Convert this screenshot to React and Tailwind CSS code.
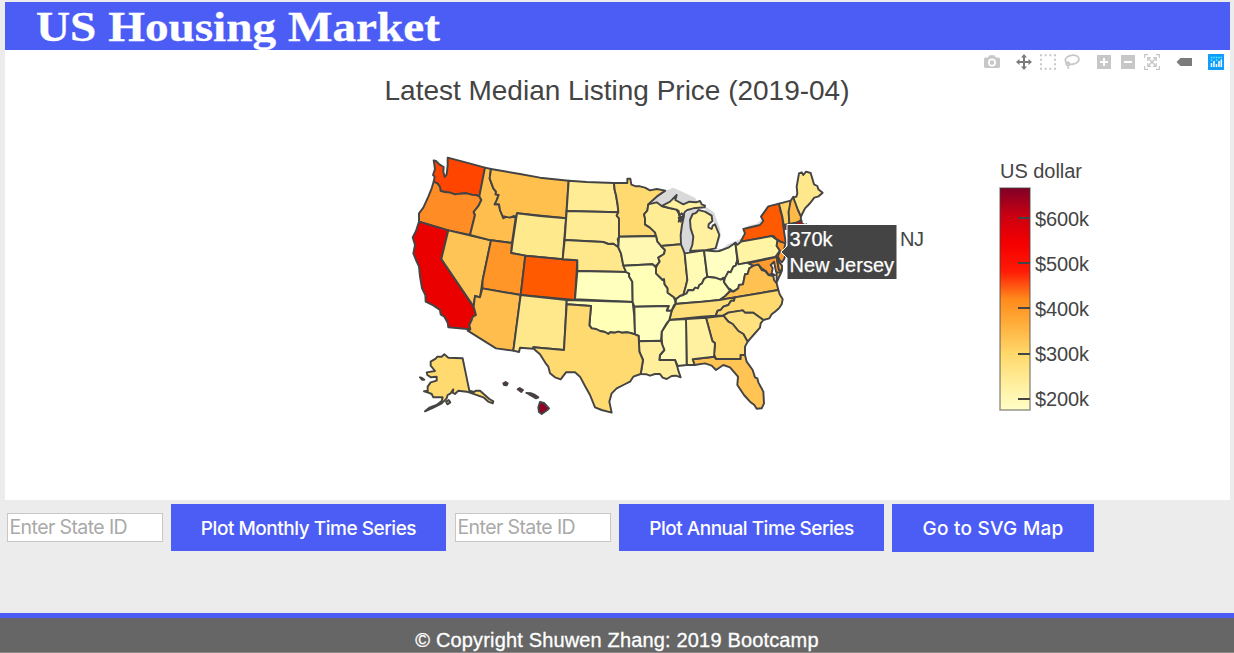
import React from "react";

// State outlines in a 3x coordinate space whose origin is (400, 145) on the page.
const STATES = [
  ["WA", "#ff4500", "101,46 108,48 118,58 131,66 130,80 134,96 140,88 143,60 143,38 200,53 255,68 247,110 238,154 228,150 215,149 200,145 180,146 165,148 150,143 135,141 122,138 120,126 112,115 101,110 104,95 99,90 105,72"],
  ["OR", "#ff8c25", "101,110 112,115 120,126 122,138 135,141 150,143 165,148 180,146 200,145 215,149 228,150 238,154 244,165 236,182 221,201 225,210 210,270 145,256 57,230 57,205 70,188 85,155 95,130"],
  ["CA", "#eb0000", "57,230 145,256 124,342 221,485 228,510 218,516 215,525 208,540 211,553 145,547 143,533 133,515 122,508 120,495 100,481 77,470 76,450 66,430 60,395 57,365 48,345 40,325 45,300 38,277 48,258"],
  ["NV", "#ffc456", "145,256 273,286 248,405 240,457 225,453 221,485 124,342"],
  ["ID", "#ffbe4e", "255,68 273,72 269,100 280,130 288,140 287,148 296,150 290,166 284,178 297,178 300,195 305,205 312,218 330,214 347,218 336,294 273,286 210,270 225,210 221,201 236,182 244,165 238,154"],
  ["MT", "#ffc04e", "273,72 360,87 420,98 506,107 498,220 351,205 347,218 342,213 330,218 312,214 310,220 304,205 300,195 297,178 284,178 290,166 296,150 287,148 288,140 280,130 269,100"],
  ["WY", "#ffe98d", "351,205 420,213 498,220 488,343 376,332 333,324"],
  ["UT", "#ff9627", "273,286 336,294 333,324 376,332 362,450 247,430 248,405"],
  ["CO", "#ff5a00", "376,332 488,343 532,346 525,465 362,450"],
  ["AZ", "#ffbd4d", "247,430 362,450 340,617 288,610 203,557 211,553 208,540 215,525 218,516 228,510 221,485 225,453 240,457"],
  ["NM", "#ffe88c", "362,450 500,465 492,615 400,607 400,611 360,608 357,621 340,617"],
  ["ND", "#ffec94", "506,107 560,111 642,114 644,135 648,150 653,180 655,202 500,198"],
  ["SD", "#ffec94", "500,198 655,202 650,212 657,220 657,275 653,283 655,292 655,307 640,296 625,297 610,291 494,285"],
  ["NE", "#ffe88c", "494,285 610,291 625,297 640,296 655,307 663,325 668,352 678,381 532,378 532,346 488,343"],
  ["KS", "#ffffbe", "532,378 678,381 688,386 687,394 697,410 698,471 525,463"],
  ["OK", "#ffffb8", "500,465 698,471 703,515 705,568 692,564 682,562 665,563 655,560 645,563 630,562 625,567 615,561 600,558 588,552 575,550 568,541 573,483 500,478"],
  ["MN", "#ffda70", "642,114 682,114 682,101 691,101 694,119 708,124 720,124 735,128 750,136 770,132 796,137 770,155 745,178 742,197 732,208 735,220 735,238 750,248 765,262 768,273 657,275 657,220 650,212 655,202 653,180 648,150 644,135"],
  ["WI", "#ffed95", "745,178 770,172 785,183 808,189 830,194 836,205 840,215 836,230 852,212 846,240 842,270 843,298 783,303 772,290 768,273 765,262 750,248 735,238 735,220 732,208 742,197"],
  ["IA", "#fff8b2", "657,275 768,273 772,290 783,303 795,315 792,327 775,338 779,350 773,358 765,364 758,358 670,362 663,325 655,307"],
  ["MO", "#ffffb8", "670,362 758,358 768,368 768,385 788,405 792,402 794,418 803,430 803,443 820,455 825,465 827,477 822,480 815,497 800,497 806,483 703,485 698,471 697,410 687,394 688,386 678,381"],
  ["IL", "#ffe98c", "783,303 843,298 848,310 854,325 862,405 857,425 850,450 840,453 828,463 820,455 803,443 803,430 794,418 792,402 788,405 768,385 768,368 773,358 779,350 775,338 792,327 795,315"],
  ["IN", "#fffab4", "854,325 912,316 922,398 912,402 906,415 898,420 894,430 885,428 880,436 865,435 860,445 850,450 857,425 862,405"],
  ["OH", "#ffffc4", "912,316 945,319 958,318 985,308 1006,293 1012,345 1007,362 1000,365 992,382 985,380 978,400 970,398 962,404 945,398 922,395"],
  ["MI-L", "#fff1a0", "870,318 912,316 947,310 958,270 945,238 938,242 935,252 925,247 926,238 937,228 935,212 915,200 895,195 890,202 885,205 878,207 870,225 872,250 880,275 877,300"],
  ["MI-U", "#fff1a0", "785,183 810,170 830,150 826,165 850,178 868,170 888,172 900,168 905,178 915,182 914,187 880,190 862,195 855,200 850,212 845,205 838,212 836,198 830,194 808,189"],
  ["NY", "#ff5a00", "1023,288 1035,265 1030,252 1080,240 1090,228 1083,215 1105,184 1137,176 1142,200 1147,215 1150,245 1157,292 1153,296 1130,283 1120,273 1023,290"],
  ["PA", "#fff3a4", "1006,293 1012,299 1023,290 1115,273 1125,280 1135,287 1130,302 1140,317 1130,330 1125,336 1015,358"],
  ["NJ", "#ff9c2d", "1132,287 1156,295 1153,310 1160,320 1152,343 1146,352 1132,338 1140,317 1130,302"],
  ["MA", "#e30000", "1153,243 1170,240 1190,234 1204,225 1206,236 1212,238 1213,246 1195,252 1155,252"],
  ["VT", "#ffd164", "1137,176 1172,167 1172,185 1166,200 1168,237 1151,240 1147,215"],
  ["NH", "#ffb946", "1172,167 1180,155 1190,175 1194,195 1203,213 1202,227 1190,232 1168,237 1166,200"],
  ["ME", "#ffe88c", "1180,158 1189,155 1192,145 1190,125 1197,85 1205,82 1210,90 1218,80 1232,84 1242,118 1252,123 1255,133 1268,143 1256,154 1243,158 1232,172 1225,180 1215,190 1208,204 1203,215 1192,190"],
  ["WV", "#ffffc8", "1012,345 1015,358 1045,353 1060,362 1055,372 1048,370 1043,387 1035,388 1029,418 1017,420 1015,430 1000,440 990,432 985,430 972,412 975,398 985,380 992,382 1000,365 1007,362"],
  ["VA", "#ffc252", "958,465 975,453 990,438 1000,440 1015,430 1017,420 1029,418 1035,388 1043,387 1048,370 1060,362 1075,358 1085,375 1095,378 1105,390 1120,393 1122,405 1130,415 1135,435"],
  ["MD", "#ff9c2d", "1045,355 1130,336 1137,375 1145,378 1140,390 1128,380 1122,350 1112,360 1118,370 1115,385 1125,390 1105,388 1098,378 1085,370 1075,358 1060,362"],
  ["DE", "#ffb442", "1130,336 1136,338 1138,352 1146,362 1146,376 1137,376"],
  ["VA-E", "#ffc252", "1130,384 1144,380 1138,394 1130,412"],
  ["KY", "#ffffba", "922,395 945,398 962,404 970,400 972,412 985,430 990,438 975,453 958,465 905,471 850,475 827,477 828,463 840,453 850,450 860,445 865,435 880,436 885,428 894,430 898,420 906,415 912,402"],
  ["TN", "#ffdf79", "827,477 850,475 905,470 958,465 1005,457 1002,467 993,467 985,480 970,485 962,495 953,497 947,512 905,515 808,525 815,497"],
  ["NC", "#ffda70", "1005,457 1135,435 1139,448 1148,463 1145,478 1137,490 1125,500 1115,508 1108,520 1090,525 1060,503 1035,503 1028,496 985,503 970,512 947,512 953,497 962,495 970,485 985,480 993,467 1002,467"],
  ["SC", "#ffe27f", "970,512 985,503 1028,496 1035,503 1060,503 1090,525 1082,535 1080,548 1063,567 1043,590 1030,567 1015,558 998,537 985,530"],
  ["GA", "#ffd96e", "918,518 970,512 985,530 998,537 1015,558 1030,567 1043,590 1035,605 1035,630 1022,630 1022,642 948,642 942,628 945,595 937,588"],
  ["FL", "#ffc453", "878,643 942,635 948,642 1022,642 1022,630 1035,630 1040,650 1058,675 1065,697 1072,700 1075,712 1090,740 1092,775 1085,790 1070,791 1063,780 1050,770 1032,750 1022,735 1012,720 1014,695 990,667 970,660 948,675 935,662 915,655 883,660"],
  ["AL", "#fff1a0", "858,522 918,518 937,588 945,595 942,635 878,643 884,660 860,660"],
  ["MS", "#fffcb8", "808,525 858,522 860,660 833,663 825,645 778,645 780,630 793,615 787,600 785,580 785,560"],
  ["AR", "#ffffc0", "703,485 806,483 800,497 815,497 808,525 800,535 785,560 783,587 717,589 716,573 705,568"],
  ["LA", "#ffee9b", "717,589 783,587 787,600 793,615 780,630 778,645 825,645 832,665 836,680 842,697 828,692 815,693 800,702 788,698 780,687 765,687 750,692 740,688 722,687 729,645 718,620"],
  ["TX", "#ffda70", "500,478 573,483 568,541 575,550 588,552 600,558 615,561 625,567 630,562 645,563 655,560 665,563 682,562 692,564 705,568 716,573 718,620 729,645 722,687 700,695 690,710 670,720 650,730 635,745 628,770 635,803 605,795 585,787 570,750 555,723 540,695 525,682 498,682 482,703 465,697 450,685 445,665 437,655 420,628 405,615 400,607 492,615"],
  ["AK", "#ffda6e", "92,650 107,641 112,635 125,635 133,628 145,638 188,640 208,737 222,741 228,737 240,737 258,753 268,762 280,769 278,775 265,770 252,758 235,752 218,746 200,740 175,737 165,747 158,743 160,733 152,745 143,750 140,760 125,775 100,788 75,799 88,788 110,780 125,768 128,757 100,757 95,747 83,742 83,725 92,712 110,707 110,695 93,697 82,690 80,682 105,678 92,662"],
  ["AK-K", "#ffda6e", "138,770 146,765 151,772 142,778"],
  ["HI1", "#8b0a20", "310,715 317,711 323,715 320,721 312,720"],
  ["HI2", "#a00026", "353,733 359,729 369,735 364,741"],
  ["HI3", "#a00026", "379,744 394,745 405,750 415,757 408,760 398,754"],
  ["HI4", "#920023", "420,771 432,774 447,790 442,795 425,807 417,801 415,787"],
];

const DARK_DETAILS = [
  "60,697 66,699 73,704 66,704",
  "72,739 80,738 82,742",
  "836,218 850,214 842,230",
];

const LAKES = [
  "738,185 770,155 796,137 820,128 850,142 885,158 892,170 868,170 850,178 826,165 830,150 785,183 770,172",
  "850,210 870,195 895,193 885,205 870,225 872,250 880,275 875,312 854,325 845,300 843,260",
  "905,180 925,190 943,203 950,225 960,250 962,275 950,312 945,240 930,212",
  "947,310 965,312 985,297 1003,290 1025,280 1028,287 1006,297 958,318",
  "1028,252 1045,242 1070,236 1083,225 1090,230 1082,243",
];

const TICKS = [
  ["$600k", 218, 226],
  ["$500k", 263, 271],
  ["$400k", 308, 316],
  ["$300k", 354, 361],
  ["$200k", 399, 406],
];

function Choropleth() {
  return (
    <svg
      className="block h-[450px] w-full font-['Liberation_Sans',Arial,sans-serif]"
      viewBox="5 50 1225 450"
    >
      <defs>
        <linearGradient id="scale" x1="0" y1="1" x2="0" y2="0">
          <stop offset="0" stopColor="#ffffc8" />
          <stop offset="0.125" stopColor="#ffed9b" />
          <stop offset="0.25" stopColor="#ffd96c" />
          <stop offset="0.375" stopColor="#ffb23f" />
          <stop offset="0.5" stopColor="#ff8a1c" />
          <stop offset="0.625" stopColor="#ff1a06" />
          <stop offset="0.75" stopColor="#f50000" />
          <stop offset="0.875" stopColor="#cb0012" />
          <stop offset="1" stopColor="#800026" />
        </linearGradient>
      </defs>
      <text x="384.500" y="100" fontSize="28" textLength="465" fill="#444">
        Latest Median Listing Price (2019-04)
      </text>

      <g transform="translate(400 145) scale(.333333)">
        {LAKES.map((p) => (
          <polygon key={p} points={p} fill="#d9d9d9" />
        ))}
        <g stroke="#444" strokeWidth="5.8" strokeLinejoin="round">
          {STATES.map(([id, fill, points]) => (
            <polygon key={id} points={points} fill={fill} />
          ))}
          {DARK_DETAILS.map((p) => (
            <polygon key={p} points={p} fill="#444" />
          ))}
        </g>
        <circle cx="1219" cy="237" r="2.500" fill="#444" />
      </g>

      <path
        d="M781,252 L787,246 V224.500 H897 V279.500 H787 V258 Z"
        fill="#444"
        stroke="#fff"
        strokeWidth="1"
      />
      <text x="789.500" y="246" fontSize="20" fill="#fff" stroke="#fff" strokeWidth=".25" textLength="43">370k</text>
      <text x="789.500" y="272" fontSize="20" fill="#fff" stroke="#fff" strokeWidth=".25" textLength="104.500">New Jersey</text>
      <text x="900" y="246" fontSize="20" fill="#444" textLength="24">NJ</text>

      <text x="1000" y="178" fontSize="20" fill="#444" textLength="82">US dollar</text>
      <rect x="1000" y="188" width="30" height="222" fill="url(#scale)" stroke="#444" strokeOpacity=".6" strokeWidth="1.4" />
      {TICKS.map(([label, y, baseline]) => (
        <g key={label}>
          <path d={`M1018,${y} H1030`} stroke="#444" strokeWidth="2" />
          <text x="1035" y={baseline} fontSize="20" fill="#444" textLength="54">
            {label}
          </text>
        </g>
      ))}
    </svg>
  );
}

function Modebar() {
  return (
    <svg
      className="absolute top-[3px] right-[5px] h-[18px] w-[244px]"
      viewBox="981 53 244 18"
    >
      <g fill="#c7c7c7">
        <path
          fillRule="evenodd"
          d="M985.500,57.500 H988 L989.300,55.300 H994.500 L995.800,57.500 H998.500 Q1000,57.500 1000,59 V66.500 Q1000,68 998.500,68 H985.500 Q984,68 984,66.500 V59 Q984,57.500 985.500,57.500 Z M992,58.600 A4,4 0 1 0 992,66.600 A4,4 0 1 0 992,58.600 Z M992,60.300 A2.300,2.300 0 1 1 992,64.900 A2.300,2.300 0 1 1 992,60.300 Z"
        />
        <path fillRule="evenodd" d="M1097,55 h14 v14 h-14 Z M1103,58 v3 h-3 v2 h3 v3 h2 v-3 h3 v-2 h-3 v-3 Z" />
        <path fillRule="evenodd" d="M1121,55 h14 v14 h-14 Z M1124,61 v2 h8 v-2 Z" />
      </g>
      <g fill="none" stroke="#c7c7c7">
        <path d="M1040,55.200 H1056 M1040,68.800 H1056" strokeWidth="2" strokeDasharray="2 2.650" />
        <path d="M1041,58.700 V67 M1055,58.700 V67" strokeWidth="2" strokeDasharray="2 2.650" />
        <ellipse cx="1072.200" cy="59.800" rx="6.900" ry="4.500" strokeWidth="1.700" transform="rotate(-10 1072 60)" />
        <path d="M1068,62 a2,1.800 0 1 0 .2,3.600 c2,0 1.900,-3 -.2,-3.600 M1068.500,65.500 Q1067,67 1069,68.700" strokeWidth="1.600" />
        <path d="M1144.600,58 V54.600 H1148 M1156,54.600 H1159.400 V58 M1159.400,66 V69.400 H1156 M1148,69.400 H1144.600 V66" strokeWidth="1.200" />
        <path d="M1148,58 L1156,66 M1156,58 L1148,66" strokeWidth="1.500" />
        <path d="M1147.700,61 V57.700 H1151 M1153,57.700 H1156.300 V61 M1156.300,63 V66.300 H1153 M1151,66.300 H1147.700 V63" strokeWidth="1.200" />
      </g>
      <g fill="#7b7b7b">
        <path d="M1024,54 l3,3.500 h-2 v3.500 h3.500 v-2 l3.500,3 l-3.500,3 v-2 h-3.500 v3.500 h2 l-3,3.500 l-3,-3.500 h2 v-3.500 h-3.500 v2 l-3.500,-3 l3.500,-3 v2 h3.500 v-3.500 h-2 Z" />
        <path d="M1176.500,62 L1180.500,58 H1192 V66 H1180.500 Z" />
      </g>
      <rect x="1208" y="54" width="16" height="16" rx=".6" fill="#119dff" />
      <g fill="none" stroke="#fff" strokeWidth="1.500">
        <path d="M1211.500,63 V67 M1214,61 V67 M1216.500,64 V67 M1219,61 V67 M1221.300,59.500 V67" />
        <path d="M1210.800,57.500 H1222" stroke="#5ff0ff" strokeDasharray="1.500 1" />
        <path d="M1210.800,60 H1212.300 M1215.800,60 H1217.300" stroke="#5ff0ff" />
      </g>
    </svg>
  );
}

function StateInput() {
  return (
    <input
      placeholder="Enter State ID"
      className="h-[29px] w-[156px] border border-[#c8c8c8] bg-white px-[1.5px] font-[Inter,sans-serif] text-[19.5px] tracking-[-0.6px] outline-none placeholder:text-[#a9a9a9]"
    />
  );
}

const BUTTON =
  "bg-[#4c5df6] pt-[3px] text-white font-[Inter,sans-serif] text-[19px] font-medium whitespace-nowrap";

export default function App() {
  return (
    <div className="flex h-[653px] flex-col overflow-hidden bg-[#ececec] pt-[2px]">
      <header className="mr-1 ml-[5px] h-12 shrink-0 bg-[#4c5df6] pl-[31px]">
        <h1 className="w-fit origin-left scale-x-[1.098] font-['Liberation_Serif',Georgia,serif] text-[43px] leading-[49px] font-bold whitespace-nowrap text-white [-webkit-text-stroke:0.3px_white]">
          US Housing Market
        </h1>
      </header>
      <main className="relative mr-1 ml-[5px] h-[450px] shrink-0 bg-white">
        <Choropleth />
        <Modebar />
      </main>
      <div className="flex h-[113px] shrink-0 items-start pt-1 pl-[7px]">
        <div className="flex h-[47px] items-center">
          <StateInput />
        </div>
        <button className={`${BUTTON} ml-2 h-[47px] w-[275px] tracking-[-0.47px]`}>Plot Monthly Time Series</button>
        <div className="ml-[9px] flex h-[47px] items-center">
          <StateInput />
        </div>
        <button className={`${BUTTON} ml-2 h-[47px] w-[265px] tracking-[-0.5px]`}>Plot Annual Time Series</button>
        <button className={`${BUTTON} ml-2 h-12 w-[202px] tracking-[0.25px]`}>Go to SVG Map</button>
      </div>
      <footer className="h-10 shrink-0 border-t-[5px] border-b border-t-[#4c5df6] border-b-[#8c8888] bg-[#666] pt-[9px] text-center font-['Liberation_Sans',Arial,sans-serif] text-[20px] leading-[26px] tracking-[0.16px] text-white [-webkit-text-stroke:0.3px_white]">
        © Copyright Shuwen Zhang: 2019 Bootcamp
      </footer>
    </div>
  );
}
